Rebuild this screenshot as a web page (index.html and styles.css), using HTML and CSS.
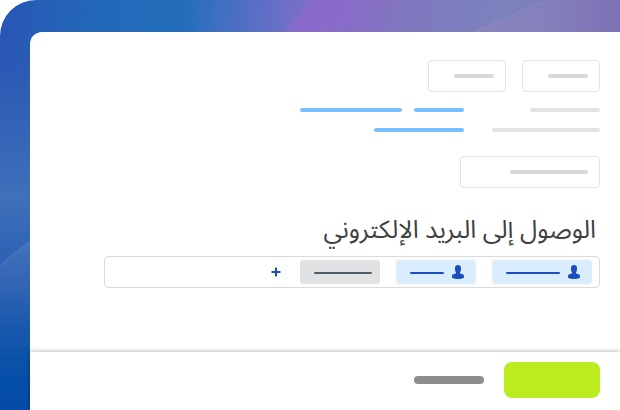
FILE: index.html
```html
<!DOCTYPE html>
<html lang="ar" dir="rtl">
<head>
    <meta charset="UTF-8">
    <meta name="viewport" content="width=device-width, initial-scale=1.0">
    <title>الوصول إلى البريد الإلكتروني</title>
    <link rel="stylesheet" href="styles.css">
</head>
<body>
    <div class="stage">
        <svg class="backdrop" viewBox="0 0 620 410" preserveAspectRatio="none" aria-hidden="true">
            <defs>
                <linearGradient id="sky" gradientUnits="userSpaceOnUse" x1="0" y1="0" x2="620" y2="60">
                    <stop offset="0" stop-color="#2a55b5"/>
                    <stop offset="0.08" stop-color="#2560b7"/>
                    <stop offset="0.17" stop-color="#226ab9"/>
                    <stop offset="0.3" stop-color="#246dbb"/>
                    <stop offset="0.36" stop-color="#426fc1"/>
                    <stop offset="0.47" stop-color="#736fc9"/>
                    <stop offset="0.55" stop-color="#8670c4"/>
                    <stop offset="0.66" stop-color="#8078bf"/>
                    <stop offset="0.8" stop-color="#7b82bd"/>
                    <stop offset="1" stop-color="#7d7ab9"/>
                </linearGradient>
                <linearGradient id="side" gradientUnits="userSpaceOnUse" x1="0" y1="30" x2="0" y2="410">
                    <stop offset="0" stop-color="#2a57b5" stop-opacity="0"/>
                    <stop offset="0.16" stop-color="#2e5db5"/>
                    <stop offset="0.44" stop-color="#3f70ba"/>
                    <stop offset="0.6" stop-color="#2d62b4"/>
                    <stop offset="1" stop-color="#2d62b4"/>
                </linearGradient>
                <linearGradient id="hill" gradientUnits="userSpaceOnUse" x1="0" y1="240" x2="0" y2="410">
                    <stop offset="0" stop-color="#4673bc"/>
                    <stop offset="0.25" stop-color="#3365b4"/>
                    <stop offset="0.5" stop-color="#1a59ad"/>
                    <stop offset="0.8" stop-color="#064fa8"/>
                    <stop offset="1" stop-color="#044ca5"/>
                </linearGradient>
                <linearGradient id="violet" gradientUnits="userSpaceOnUse" x1="285" y1="0" x2="400" y2="20">
                    <stop offset="0" stop-color="#8669ca"/>
                    <stop offset="0.3" stop-color="#886aca"/>
                    <stop offset="1" stop-color="#8b6aca" stop-opacity="0"/>
                </linearGradient>
                <linearGradient id="beam" gradientUnits="userSpaceOnUse" x1="475" y1="32" x2="620" y2="32">
                    <stop offset="0" stop-color="#8884bd"/>
                    <stop offset="0.5" stop-color="#8380bb"/>
                    <stop offset="1" stop-color="#7e70b6"/>
                </linearGradient>
            </defs>
            <rect width="620" height="410" fill="url(#sky)"/>
            <rect y="30" width="60" height="380" fill="url(#side)"/>
            <path d="M0 266Q14 252 30 241L60 222V410H0Z" fill="url(#hill)"/>
            <path d="M310 0L282 36H410V0Z" fill="url(#violet)"/>
            <path d="M547 0Q510 15 473 33H620V0Z" fill="url(#beam)"/>
            <path d="M547 0Q510 15 473 33" fill="none" stroke="#918fc4" stroke-opacity="0.6"/>
            <path d="M0 266Q14 252 30 241" fill="none" stroke="#6f94cc" stroke-opacity="0.4"/>
        </svg>

        <main class="window">
            <div class="content">
                <div class="toolbar">
                    <button class="box" type="button" aria-label="خيار"><span class="line"></span></button>
                    <button class="box" type="button" aria-label="خيار"><span class="line"></span></button>
                </div>

                <div class="details">
                    <div class="row">
                        <div class="term"><span class="line line-short"></span></div>
                        <a class="line line-link line-small" href="#" aria-label="رابط"></a>
                        <a class="line line-link line-large" href="#" aria-label="رابط"></a>
                    </div>
                    <div class="row">
                        <div class="term"><span class="line line-long"></span></div>
                        <a class="line line-link line-medium" href="#" aria-label="رابط"></a>
                    </div>
                </div>

                <button class="box box-wide" type="button" aria-label="خيار"><span class="line"></span></button>

                <h1 class="title">الوصول إلى البريد الإلكتروني</h1>

                <div class="field">
                    <button class="chip chip-large" type="button" aria-label="مستخدم">
                        <svg class="person" viewBox="0 0 12 14" aria-hidden="true">
                            <path d="M6 0C8 0 9 1.200 9 3C9 5 8.700 6.600 8 7.400V8.200C8.400 8.900 12 8.700 12 11V12.800C10.500 13.700 8 14 6 14S1.500 13.700 0 12.800V11C0 8.700 3.600 8.900 4 8.200V7.400C3.300 6.600 3 5 3 3C3 1.200 4 0 6 0Z"/>
                        </svg>
                        <span class="chip-line"></span>
                    </button>
                    <button class="chip" type="button" aria-label="مستخدم">
                        <svg class="person" viewBox="0 0 12 14" aria-hidden="true">
                            <path d="M6 0C8 0 9 1.200 9 3C9 5 8.700 6.600 8 7.400V8.200C8.400 8.900 12 8.700 12 11V12.800C10.500 13.700 8 14 6 14S1.500 13.700 0 12.800V11C0 8.700 3.600 8.900 4 8.200V7.400C3.300 6.600 3 5 3 3C3 1.200 4 0 6 0Z"/>
                        </svg>
                        <span class="chip-line"></span>
                    </button>
                    <button class="chip chip-grey" type="button" aria-label="مجموعة"><span class="chip-line"></span></button>
                    <button class="add" type="button" aria-label="إضافة">
                        <svg class="plus" viewBox="0 0 10 10" aria-hidden="true">
                            <path d="M5 0.500V9.500M0.500 5H9.500"/>
                        </svg>
                    </button>
                </div>
            </div>

            <footer class="actions">
                <button class="save" type="button" aria-label="حفظ"></button>
                <button class="cancel" type="button" aria-label="إلغاء"></button>
            </footer>
        </main>
    </div>
</body>
</html>
```
FILE: styles.css
```css
* {
    box-sizing: border-box;
}
body {
    margin: 0;
    background: #fff;
    font-family: "Noto Sans Arabic", "Noto Sans", "DejaVu Sans", sans-serif;
}
button {
    margin: 0;
    padding: 0;
    border: 0;
    cursor: pointer;
}

/* Blue and violet backdrop */
.stage {
    position: relative;
    display: flex;
    min-height: 100vh;
    padding: 32px 0 0 30px;
    border-top-left-radius: 36px;
    overflow: hidden;
}
.backdrop {
    position: absolute;
    top: 0;
    left: 0;
    width: 100%;
    height: 100%;
}
.window {
    position: relative;
    flex: 1;
    display: flex;
    flex-direction: column;
    background: #fff;
    border-top-left-radius: 12px;
}
.content {
    flex: 1;
    padding: 28px 20px 20px 74px;
}

/* Placeholder lines */
.line {
    display: block;
    width: 40px;
    height: 4px;
    border-radius: 2px;
    background: #d8d8d8;
}
.line-short {
    width: 70px;
    background: #e3e3e3;
}
.line-long {
    width: 108px;
    background: #e3e3e3;
}
.line-link {
    background: #75bfff;
}
.line-small {
    width: 50px;
}
.line-medium {
    width: 90px;
}
.line-large {
    width: 102px;
}

.toolbar {
    display: flex;
    gap: 16px;
}
.box {
    display: flex;
    align-items: center;
    width: 78px;
    height: 32px;
    padding: 0 11px;
    border: 1px solid #e3e3e3;
    border-radius: 4px;
    background: #fff;
}
.box-wide {
    width: 140px;
}
.box-wide .line {
    width: 78px;
}
.details {
    display: grid;
    gap: 16px;
    margin: 16px 0 24px;
}
.row {
    display: flex;
    gap: 12px;
}
.term {
    width: 124px;
}

.title {
    margin: 22px 0 6px;
    padding: 0 4px;
    color: #404040;
    font-size: 25px;
    font-weight: 400;
    line-height: 40px;
}
.field {
    display: flex;
    align-items: center;
    gap: 16px;
    height: 32px;
    padding: 0 7px;
    border: 1px solid #d9dadb;
    border-radius: 4px;
}
.chip {
    display: flex;
    align-items: center;
    gap: 8px;
    width: 80px;
    height: 24px;
    padding: 0 12px 0 14px;
    border-radius: 4px;
    background: #daedfd;
    color: #1b4fbd;
}
.chip-large {
    width: 100px;
}
.chip-grey {
    padding: 0 8px 0 14px;
    background: #e0e2e4;
    color: #525c69;
}
.chip-line {
    flex: 1;
    height: 2px;
    margin-top: 2px;
    border-radius: 1px;
    background: currentColor;
}
.person {
    width: 12px;
    height: 14px;
    fill: currentColor;
}
.add {
    display: flex;
    align-items: center;
    justify-content: center;
    width: 16px;
    height: 24px;
    background: none;
    color: #1b4fbd;
}
.plus {
    width: 10px;
    height: 10px;
    fill: none;
    stroke: currentColor;
    stroke-width: 2;
}

.actions {
    display: flex;
    align-items: center;
    gap: 20px;
    padding: 10px 20px 12px;
    background: #fff;
    box-shadow: 0 0 5px rgba(0, 0, 0, 0.35);
}
.save {
    width: 96px;
    height: 36px;
    border-radius: 8px;
    background: #bbed21;
}
.cancel {
    width: 70px;
    height: 8px;
    border-radius: 4px;
    background: #8d8d8d;
}
```
